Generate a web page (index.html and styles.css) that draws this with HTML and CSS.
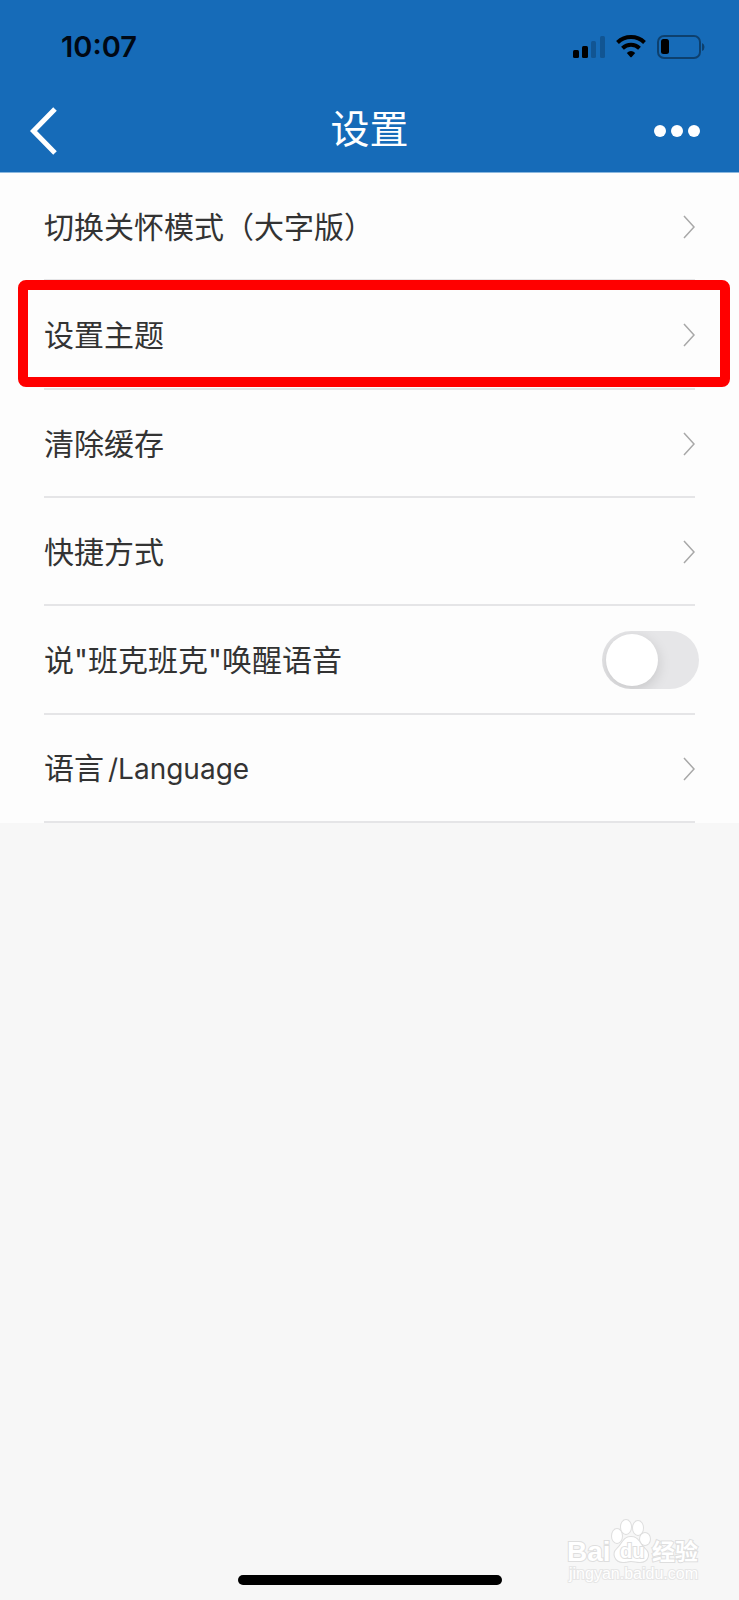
FILE: index.html
```html
<!DOCTYPE html>
<html lang="zh-CN">
<head>
<meta charset="utf-8">
<meta name="viewport" content="width=device-width, initial-scale=1">
<title>设置</title>
<link rel="stylesheet" href="styles.css">
</head>
<body>
<div class="screen">
  <header class="header">
    <div class="status">
      <time class="clock">10:07</time>
      <div class="indicators">
        <svg class="signal" width="32" height="24" viewBox="0 0 32 24" aria-hidden="true">
          <rect x="0" y="15" width="6" height="8" rx="1.5"/>
          <rect x="9" y="11" width="6" height="12" rx="1.5"/>
          <rect class="dim" x="18" y="6" width="5" height="17" rx="1.5"/>
          <rect class="dim" x="27" y="1" width="5" height="22" rx="1.5"/>
        </svg>
        <svg class="wifi" width="30" height="24" viewBox="0 0 30 24" aria-hidden="true">
          <path class="arc" d="M1.5 7.5A19.5 19.5 0 0 1 28.500 7.500"/>
          <path class="arc" d="M6.500 13.200A12.300 12.300 0 0 1 23.500 13.200"/>
          <path d="M10.800 17.900Q15 14.300 19.200 17.900L15.700 22Q15 22.700 14.300 22Z"/>
        </svg>
        <svg class="battery" width="48" height="24" viewBox="0 0 48 24" aria-hidden="true">
          <rect class="shell" x="1" y="1" width="42" height="22" rx="6"/>
          <rect x="4" y="4" width="8" height="15" rx="2.500"/>
          <path class="nub" d="M45 8Q47.500 9 47.500 12T45 16Z"/>
        </svg>
      </div>
    </div>
    <div class="navbar">
      <button class="icon-button" type="button" aria-label="返回">
        <svg width="28" height="48" viewBox="0 0 28 48"><path class="back" d="M25 2L3.500 24L25 46"/></svg>
      </button>
      <h1 class="title">设置</h1>
      <button class="icon-button more" type="button" aria-label="更多">
        <svg width="46" height="12" viewBox="0 0 46 12"><circle cx="6" cy="6" r="6"/><circle cx="23" cy="6" r="6"/><circle cx="40" cy="6" r="6"/></svg>
      </button>
    </div>
  </header>

  <main class="main">
    <ul class="list">
      <li class="item"><button class="row" type="button"><span>切换关怀模式（大字版）</span>
        <svg class="chevron" width="12" height="24" viewBox="0 0 12 24"><path d="M1 1L11 12L1 23"/></svg></button></li>
      <li class="item highlighted"><button class="row" type="button"><span>设置主题</span>
        <svg class="chevron" width="12" height="24" viewBox="0 0 12 24"><path d="M1 1L11 12L1 23"/></svg></button></li>
      <li class="item"><button class="row" type="button"><span>清除缓存</span>
        <svg class="chevron" width="12" height="24" viewBox="0 0 12 24"><path d="M1 1L11 12L1 23"/></svg></button></li>
      <li class="item"><button class="row" type="button"><span>快捷方式</span>
        <svg class="chevron" width="12" height="24" viewBox="0 0 12 24"><path d="M1 1L11 12L1 23"/></svg></button></li>
      <li class="item"><div class="row"><label for="wake">说"班克班克"唤醒语音</label>
        <input class="switch" id="wake" type="checkbox" role="switch"></div></li>
      <li class="item"><button class="row" type="button"><span>语言<span class="latin">/Language</span></span>
        <svg class="chevron" width="12" height="24" viewBox="0 0 12 24"><path d="M1 1L11 12L1 23"/></svg></button></li>
    </ul>
  </main>

  <footer class="footer"><div class="home-bar"></div></footer>

  <svg class="watermark" width="134" height="66" viewBox="0 0 134 66">
    <g class="paw">
      <ellipse cx="51" cy="17" rx="5" ry="7"/>
      <ellipse cx="60" cy="8" rx="5" ry="7"/>
      <ellipse cx="72" cy="9" rx="5" ry="7"/>
      <ellipse cx="79" cy="20" rx="5" ry="6"/>
      <path d="M65 18C57 18 56 26 51 30C46 34 49 43 57 43C61 43 62 42 65 42C69 42 70 43 74 43C83 43 84 34 79 30C74 26 73 18 65 18Z"/>
    </g>
    <text class="brand" x="1" y="42">Bai</text>
    <text class="du" x="54" y="39">du</text>
    <text class="brand-cn" x="86" y="41">经验</text>
    <text class="site" x="3" y="60">jingyan.baidu.com</text>
  </svg>
</div>
</body>
</html>
```

FILE: styles.css
```css
* {
  box-sizing: border-box;
}

body {
  margin: 0;
  background: #f7f7f7;
  color: #333;
  font-family: Inter, "Noto Sans CJK SC", sans-serif;
}

button {
  border: 0;
  padding: 0;
  background: none;
  color: inherit;
  font: inherit;
}

svg {
  display: block;
}

.screen {
  position: relative;
  display: flex;
  flex-direction: column;
  min-height: 100vh;
}

.header {
  background: #166bb8;
  border-bottom: 1px solid #8bb8df;
}

.status {
  display: flex;
  align-items: center;
  justify-content: space-between;
  height: 92px;
  padding: 2px 34px 0 61px;
}

.clock {
  color: #000814;
  font-size: 29px;
  font-weight: 600;
  line-height: 36px;
}

.indicators {
  display: flex;
  gap: 11px;
}

.dim {
  opacity: 0.2;
}

.arc {
  fill: none;
  stroke: #000;
  stroke-width: 4;
}

.shell {
  fill: none;
  stroke: #000;
  stroke-width: 2;
  opacity: 0.4;
}

.nub {
  opacity: 0.4;
}

.navbar {
  display: grid;
  grid-template-columns: 1fr auto 1fr;
  align-items: center;
  height: 80px;
  padding: 0 39px 2px 30px;
  color: #fff;
}

.icon-button {
  justify-self: start;
}

.more {
  justify-self: end;
  fill: #fff;
}

.back {
  fill: none;
  stroke: #fff;
  stroke-width: 5;
}

.title {
  margin: 0 0 0 9px;
  padding-bottom: 4px;
  font-size: 39px;
  font-weight: 400;
  line-height: 56px;
}

.main {
  flex: 1;
}

.list {
  display: grid;
  grid-auto-rows: 1fr;
  min-height: 650px;
  margin: 0;
  padding: 0;
  list-style: none;
  background: #fdfdfd;
}

.item {
  position: relative;
  display: flex;
  padding: 0 44px;
}

.highlighted::after {
  content: "";
  position: absolute;
  inset: -1px 9px 3px 18px;
  border: 10px solid #f00;
  border-radius: 8px;
  pointer-events: none;
}

.row {
  display: flex;
  flex: 1;
  align-items: center;
  justify-content: space-between;
  padding-top: 2px;
  border-bottom: 2px solid #e5e5e7;
  font-size: 30px;
  line-height: 44px;
  text-align: left;
}

.latin {
  margin-left: 4px;
  font-size: 28px;
}

.chevron {
  fill: none;
  stroke: #a8a8a8;
  stroke-width: 1.5;
}

.switch {
  appearance: none;
  display: flex;
  align-items: center;
  width: 97px;
  height: 58px;
  margin: 0 -4px 0 0;
  padding: 0 4px;
  border-radius: 29px;
  background: #e6e6e8;
  overflow: hidden;
}

.switch::before {
  content: "";
  width: 52px;
  height: 52px;
  border-radius: 50%;
  background: #fff;
  box-shadow: 0 4px 14px rgba(0, 0, 0, 0.14);
}

.switch:checked {
  justify-content: flex-end;
  background: #166bb8;
}

.footer {
  display: flex;
  justify-content: center;
  padding-bottom: 15px;
}

.home-bar {
  width: 264px;
  height: 10px;
  border-radius: 5px;
  background: #000;
}

.watermark {
  position: absolute;
  right: 39px;
  bottom: 15px;
  fill: #fff;
  stroke: #dedede;
  stroke-width: 2;
  paint-order: stroke;
}

.brand,
.du,
.site {
  font-family: "Liberation Sans", sans-serif;
}

.brand {
  font-size: 28px;
  font-weight: 700;
}

.du {
  font-size: 20px;
  font-weight: 700;
}

.brand-cn {
  font-size: 23px;
  font-weight: 700;
}

.site {
  font-size: 16px;
  stroke: #e6e6e6;
}
```
